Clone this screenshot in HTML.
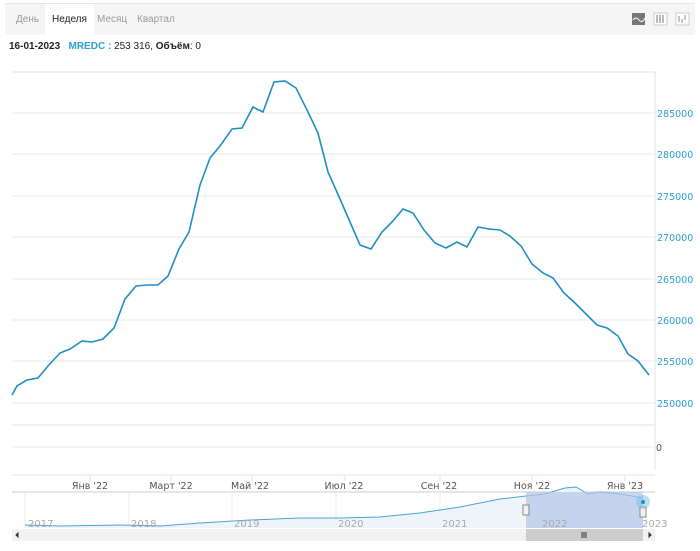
<!DOCTYPE html>
<html><head><meta charset="utf-8"><style>
body{margin:0;width:700px;height:551px;background:#fff;font-family:"Liberation Sans",sans-serif;overflow:hidden;position:relative}
.bar{position:absolute;left:5px;top:3px;width:690px;height:31px;background:#f5f5f5;border-top:1px solid #e6e6e6}
.tab{position:absolute;top:0;height:31px;line-height:31px;font-size:10px;color:#999}
.hdr{position:absolute;left:9px;top:41px;font-size:10px;color:#222}
svg{position:absolute;left:0;top:0}
</style></head><body>
<div class="bar">
<div class="tab" style="left:11px">День</div>
<div class="tab" style="left:40px;width:49px;background:#fff;color:#222;text-align:center">Неделя</div>
<div class="tab" style="left:92px">Месяц</div>
<div class="tab" style="left:132px">Квартал</div>
</div>
<div class="hdr"><b>16-01-2023</b> &nbsp; <b style="color:#2d9fd1">MREDC :</b> 253 316, <b>Объём</b>: 0</div>
<svg width="700" height="551" font-family="DejaVu Sans,sans-serif">
<rect x="632" y="13" width="13" height="12" fill="#777"/>
<path d="M633 20 q3 -4 6 0 t6 -2" stroke="#fff" fill="none"/>
<rect x="654" y="13" width="13" height="12" fill="#fff" stroke="#ccc"/>
<path d="M657 15v8M660 15v8M663 15v8" stroke="#777"/>
<rect x="676" y="13" width="13" height="12" fill="#fff" stroke="#ccc"/>
<path d="M679 16v6M682 19v4M685 15v5" stroke="#888"/>
<path d="M12 72H655V470M655 425H12" stroke="#dde4ee" fill="none"/>
<g stroke="#e8e8e8">
<line x1="12" x2="655" y1="113" y2="113"/><line x1="12" x2="655" y1="154" y2="154"/><line x1="12" x2="655" y1="196" y2="196"/><line x1="12" x2="655" y1="237" y2="237"/><line x1="12" x2="655" y1="279" y2="279"/><line x1="12" x2="655" y1="320" y2="320"/><line x1="12" x2="655" y1="361" y2="361"/><line x1="12" x2="655" y1="403" y2="403"/><line x1="12" x2="655" y1="447" y2="447"/>
</g>
<line x1="12" x2="655" y1="475" y2="475" stroke="#dde4ee"/>
<g fill="#2d9fd1" font-size="9.5">
<text x="657" y="117">285000</text><text x="657" y="158">280000</text><text x="657" y="200">275000</text><text x="657" y="241">270000</text><text x="657" y="283">265000</text><text x="657" y="324">260000</text><text x="657" y="365">255000</text><text x="657" y="407">250000</text>
</g>
<text x="656" y="451" font-size="9.5" fill="#555">0</text>
<polyline fill="none" stroke="#1f8ec6" stroke-width="1.6" points="12,395 17,386 27,380 38,378 48,366 60,353 70,349 82,341 92,342 103,339 114,328 125,299 136,286 147,285 158,285 168,276 179,249 189,232 200,185 210,158 220,146 232,129 242,128 253,107 263,112 274,82 285,81 296,88 307,110 318,133 328,172 340,199 350,222 360,245 371,249 382,232 392,222 403,209 413,213 424,230 435,243 446,248 457,242 467,247 478,227 489,229 500,230 510,236 521,246 532,264 543,273 553,278 564,293 575,303 586,314 597,325 607,328 618,336 628,354 638,361 649,375"/>
<g stroke="#dde4ee"><line x1="90" x2="90" y1="475" y2="481"/><line x1="171" x2="171" y1="475" y2="481"/><line x1="252" x2="252" y1="475" y2="481"/><line x1="345" x2="345" y1="475" y2="481"/><line x1="440" x2="440" y1="475" y2="481"/><line x1="532" x2="532" y1="475" y2="481"/><line x1="625" x2="625" y1="475" y2="481"/></g>
<g fill="#555" font-size="9.5" text-anchor="middle">
<text x="90" y="489">Янв '22</text><text x="171" y="489">Март '22</text><text x="250" y="489">Май '22</text><text x="344" y="489">Июл '22</text><text x="439" y="489">Сен '22</text><text x="532" y="489">Ноя '22</text><text x="625" y="489">Янв '23</text>
</g>
<line x1="12" x2="655" y1="492" y2="492" stroke="#ccc"/>
<g stroke="#eee"><line x1="25" x2="25" y1="492" y2="528"/><line x1="129" x2="129" y1="492" y2="528"/><line x1="232" x2="232" y1="492" y2="528"/><line x1="336" x2="336" y1="492" y2="528"/><line x1="440" x2="440" y1="492" y2="528"/><line x1="538" x2="538" y1="492" y2="528"/></g>
<path d="M25 525 L60 526 L120 525 L160 526 L200 523 L250 520 L300 518 L340 518 L380 517 L420 513 L460 507 L500 499 L526 496 L545 494 L565 488 L576 487 L588 494 L600 492 L620 494 L643 498 L643 528 L25 528Z" fill="#eef5fa"/>
<path d="M25 525 L60 526 L120 525 L160 526 L200 523 L250 520 L300 518 L340 518 L380 517 L420 513 L460 507 L500 499 L526 496 L545 494 L565 488 L576 487 L588 494 L600 492 L620 494 L643 498" fill="none" stroke="#4aa3d6" stroke-width="1"/>
<rect x="526" y="492" width="117" height="36" fill="#b4c6e6" fill-opacity="0.7"/>
<g fill="#aaa" font-size="10"><text x="28" y="527">2017</text><text x="131" y="527">2018</text><text x="234" y="527">2019</text><text x="338" y="527">2020</text><text x="442" y="527">2021</text><text x="542" y="527">2022</text><text x="642" y="527">2023</text></g>
<rect x="523" y="505" width="6" height="10" fill="#f2f2f2" stroke="#888"/>
<rect x="640" y="507" width="6" height="10" fill="#f2f2f2" stroke="#888"/>
<circle cx="643" cy="502" r="7" fill="#7fbde6" fill-opacity="0.5"/><circle cx="643" cy="502" r="2" fill="#1f8ec6"/>
<rect x="12" y="529" width="643" height="12" fill="#f2f2f2"/>
<rect x="526" y="529" width="117" height="12" fill="#ccc"/>
<path d="M582 532v6M584 532v6M586 532v6" stroke="#333"/>
<path d="M18 533v4l-2-2z M649 533v4l2-2z" fill="#333" stroke="#333"/>
</svg>
</body></html>
